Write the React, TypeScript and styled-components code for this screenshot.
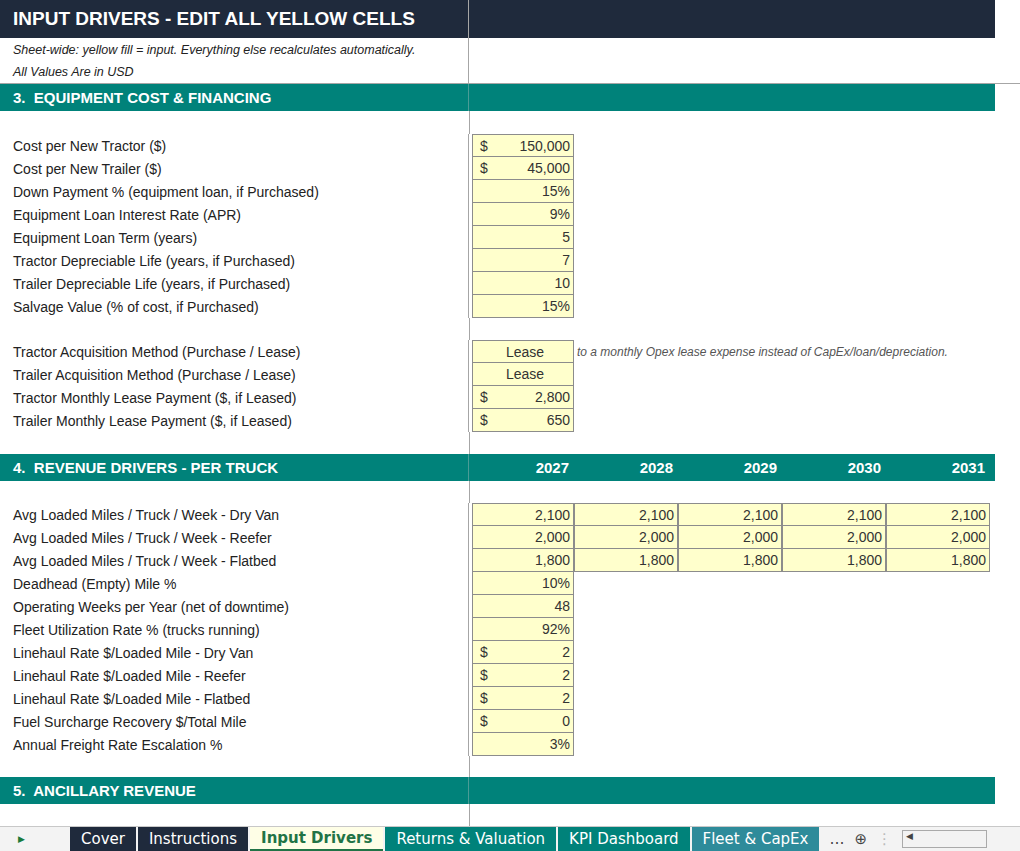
import React from 'react';
import styled, { createGlobalStyle } from 'styled-components';

const Global = createGlobalStyle`
  body { margin: 0; background: #fff; font-family: "Liberation Sans", Arial, sans-serif; }
`;

const Page = styled.div`
  width: 1020px;
  height: 851px;
  overflow: hidden;
  display: flex;
  flex-direction: column;
`;

const Sheet = styled.div`
  flex: 1;
  display: flex;
  flex-direction: column;
  width: 995px;
`;

const Row = styled.div<{ h?: number }>`
  display: flex;
  height: ${(p) => p.h ?? 23}px;
  flex-shrink: 0;
`;

const Label = styled.div`
  width: 469px;
  border-right: 1px solid #a6a6a6;
  box-sizing: border-box;
  padding-left: 13px;
  font-size: 14px;
  color: #222;
  display: flex;
  align-items: center;
`;

const Title = styled(Row)`
  background: #1f2a3c;
  color: #fff;
  font-weight: bold;
  font-size: 19px;
  height: 38px;
  align-items: center;
`;

const TitleText = styled.div`
  width: 469px;
  border-right: 1px solid #a6a6a6;
  height: 100%;
  box-sizing: border-box;
  padding-left: 13px;
  display: flex;
  align-items: center;
`;

const Note = styled(Label)`
  font-style: italic;
  font-size: 12.5px;
  padding-left: 13px;
`;

const Section = styled(Row)`
  background: #00827a;
  color: #fff;
  font-weight: bold;
  font-size: 15px;
  height: 27px;
  align-items: center;
`;

const SectionText = styled.div`
  width: 469px;
  padding-left: 13px;
  height: 100%;
  display: flex;
  align-items: center;
  border-right: 1px solid #4a9c96;
  box-sizing: border-box;
`;

const Year = styled.div`
  width: 104px;
  text-align: right;
  padding-right: 4px;
  box-sizing: border-box;
`;

const Cell = styled.div<{ center?: boolean; first?: boolean }>`
  width: ${(p) => (p.first ? 102 : 104)}px;
  margin-left: ${(p) => (p.first ? 3 : 0)}px;
  background: #ffffcc;
  border: 1px solid #8c8c8c;
  border-top: none;
  box-sizing: border-box;
  font-size: 14px;
  color: #333;
  display: flex;
  align-items: center;
  justify-content: ${(p) => (p.center ? 'center' : 'space-between')};
  padding: 0 3px 0 7px;
`;

const TopCell = styled(Cell)`
  border-top: 1px solid #8c8c8c;
`;

const Comment = styled.div`
  font-size: 12px;
  font-style: italic;
  color: #555;
  padding-left: 3px;
  display: flex;
  align-items: center;
  white-space: nowrap;
`;

const Spacer = styled.div<{ h: number }>`
  display: flex;
  height: ${(p) => p.h}px;
  flex-shrink: 0;
  & > div { width: 469px; border-right: 1px solid #a6a6a6; }
`;

const Tabs = styled.div`
  height: 26px;
  border-top: 1px solid #c8c8c8;
  display: flex;
  align-items: stretch;
  background: #f3f3f3;
  font-family: "DejaVu Sans", sans-serif;
  font-size: 15px;
`;

const Arrow = styled.div`
  width: 70px;
  padding-left: 18px;
  color: #1a7a3a;
  font-size: 9px;
  display: flex;
  align-items: center;
  box-sizing: border-box;
`;

const Tab = styled.div<{ bg: string; active?: boolean }>`
  background: ${(p) => p.bg};
  color: ${(p) => (p.active ? '#217346' : '#fff')};
  font-weight: ${(p) => (p.active ? 'bold' : 'normal')};
  padding: 0 11px;
  margin-right: 2px;
  display: flex;
  align-items: center;
  border-bottom: ${(p) => (p.active ? '2px solid #217346' : 'none')};
`;

const Extra = styled.div`
  display: flex;
  align-items: center;
  gap: 10px;
  padding-left: 8px;
  color: #444;
`;

type R = { label: string; vals: (string | null)[]; dollar?: boolean; center?: boolean; comment?: string };

const Data = ({ rows }: { rows: R[] }) => (
  <>
    {rows.map((r, i) => (
      <Row key={r.label}>
        <Label>{r.label}</Label>
        {r.vals.map((v, j) => {
          const C = i === 0 ? TopCell : Cell;
          return (
            <C key={j} first={j === 0} center={r.center}>
              {r.center ? v : <><span>{r.dollar ? '$' : ''}</span><span>{v}</span></>}
            </C>
          );
        })}
        {r.comment && <Comment>{r.comment}</Comment>}
      </Row>
    ))}
  </>
);

const equip: R[] = [
  { label: 'Cost per New Tractor ($)', vals: ['150,000'], dollar: true },
  { label: 'Cost per New Trailer ($)', vals: ['45,000'], dollar: true },
  { label: 'Down Payment % (equipment loan, if Purchased)', vals: ['15%'] },
  { label: 'Equipment Loan Interest Rate (APR)', vals: ['9%'] },
  { label: 'Equipment Loan Term (years)', vals: ['5'] },
  { label: 'Tractor Depreciable Life (years, if Purchased)', vals: ['7'] },
  { label: 'Trailer Depreciable Life (years, if Purchased)', vals: ['10'] },
  { label: 'Salvage Value (% of cost, if Purchased)', vals: ['15%'] },
];

const lease: R[] = [
  { label: 'Tractor Acquisition Method (Purchase / Lease)', vals: ['Lease'], center: true, comment: 'to a monthly Opex lease expense instead of CapEx/loan/depreciation.' },
  { label: 'Trailer Acquisition Method (Purchase / Lease)', vals: ['Lease'], center: true },
  { label: 'Tractor Monthly Lease Payment ($, if Leased)', vals: ['2,800'], dollar: true },
  { label: 'Trailer Monthly Lease Payment ($, if Leased)', vals: ['650'], dollar: true },
];

const rev: R[] = [
  { label: 'Avg Loaded Miles / Truck / Week - Dry Van', vals: Array(5).fill('2,100') },
  { label: 'Avg Loaded Miles / Truck / Week - Reefer', vals: Array(5).fill('2,000') },
  { label: 'Avg Loaded Miles / Truck / Week - Flatbed', vals: Array(5).fill('1,800') },
  { label: 'Deadhead (Empty) Mile %', vals: ['10%'] },
  { label: 'Operating Weeks per Year (net of downtime)', vals: ['48'] },
  { label: 'Fleet Utilization Rate % (trucks running)', vals: ['92%'] },
  { label: 'Linehaul Rate $/Loaded Mile - Dry Van', vals: ['2'], dollar: true },
  { label: 'Linehaul Rate $/Loaded Mile - Reefer', vals: ['2'], dollar: true },
  { label: 'Linehaul Rate $/Loaded Mile - Flatbed', vals: ['2'], dollar: true },
  { label: 'Fuel Surcharge Recovery $/Total Mile', vals: ['0'], dollar: true },
  { label: 'Annual Freight Rate Escalation %', vals: ['3%'] },
];

export default function App() {
  return (
    <Page>
      <Global />
      <Sheet>
        <Title><TitleText>INPUT DRIVERS - EDIT ALL YELLOW CELLS</TitleText></Title>
        <Row><Note>Sheet-wide: yellow fill = input. Everything else recalculates automatically.</Note></Row>
        <Row h={22} style={{ borderBottom: '1px solid #a6a6a6', width: 1020 }}><Note>All Values Are in USD</Note></Row>
        <Section><SectionText>3.&nbsp; EQUIPMENT COST &amp; FINANCING</SectionText></Section>
        <Spacer h={23}><div /></Spacer>
        <Data rows={equip} />
        <Spacer h={22}><div /></Spacer>
        <Data rows={lease} />
        <Spacer h={22}><div /></Spacer>
        <Section>
          <SectionText>4.&nbsp; REVENUE DRIVERS - PER TRUCK</SectionText>
          {['2027', '2028', '2029', '2030', '2031'].map((y) => <Year key={y}>{y}</Year>)}
        </Section>
        <Spacer h={22}><div /></Spacer>
        <Data rows={rev} />
        <Spacer h={21}><div /></Spacer>
        <Section><SectionText>5.&nbsp; ANCILLARY REVENUE</SectionText></Section>
        <Spacer h={22}><div /></Spacer>
      </Sheet>
      <Tabs>
        <Arrow>▶</Arrow>
        <Tab bg="#1f2a3c">Cover</Tab>
        <Tab bg="#1f2a3c">Instructions</Tab>
        <Tab bg="#fefee6" active>Input Drivers</Tab>
        <Tab bg="#00827a">Returns &amp; Valuation</Tab>
        <Tab bg="#00827a">KPI Dashboard</Tab>
        <Tab bg="#2e8b9a">Fleet &amp; CapEx</Tab>
        <Extra>… <span>⊕</span> <span style={{ color: '#bbb' }}>⋮</span> <span style={{ border: '1px solid #aaa', width: 80, height: 16, fontSize: 9, paddingLeft: 3 }}>◀</span></Extra>
      </Tabs>
    </Page>
  );
}
